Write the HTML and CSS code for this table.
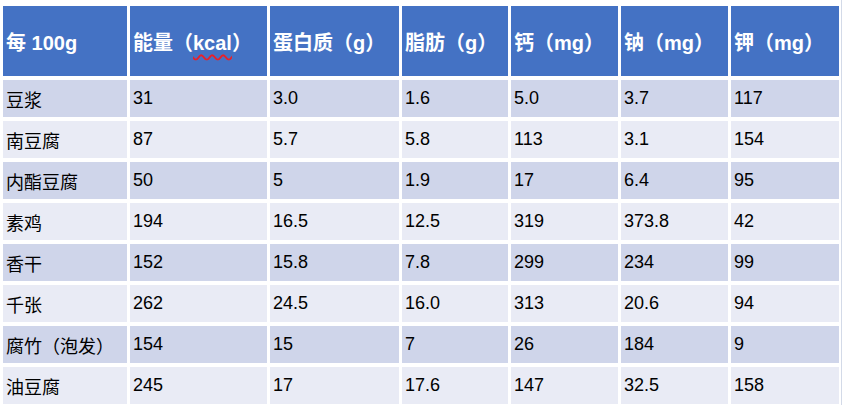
FILE: index.html
```html
<!DOCTYPE html>
<html lang="zh-CN">
<head>
  <meta charset="UTF-8" />
  <meta name="viewport" content="width=device-width, initial-scale=1.0"/>
  <title>豆制品营养成分</title>
  <link rel="stylesheet" href="styles.css">
</head>
<body>
  <div class="slide">
    <table class="nutrition">
      <colgroup>
        <col class="c-name">
        <col class="c-energy">
        <col class="c-protein">
        <col class="c-fat">
        <col class="c-mineral">
        <col class="c-mineral">
        <col class="c-last">
      </colgroup>
      <thead>
        <tr>
          <th>每 100g</th>
          <th>能量（<span class="typo">kcal</span>）</th>
          <th>蛋白质（g）</th>
          <th>脂肪（g）</th>
          <th>钙（mg）</th>
          <th>钠（mg）</th>
          <th>钾（mg）</th>
        </tr>
      </thead>
      <tbody>
        <tr><td>豆浆</td><td>31</td><td>3.0</td><td>1.6</td><td>5.0</td><td>3.7</td><td>117</td></tr>
        <tr><td>南豆腐</td><td>87</td><td>5.7</td><td>5.8</td><td>113</td><td>3.1</td><td>154</td></tr>
        <tr><td>内酯豆腐</td><td>50</td><td>5</td><td>1.9</td><td>17</td><td>6.4</td><td>95</td></tr>
        <tr><td>素鸡</td><td>194</td><td>16.5</td><td>12.5</td><td>319</td><td>373.8</td><td>42</td></tr>
        <tr><td>香干</td><td>152</td><td>15.8</td><td>7.8</td><td>299</td><td>234</td><td>99</td></tr>
        <tr><td>千张</td><td>262</td><td>24.5</td><td>16.0</td><td>313</td><td>20.6</td><td>94</td></tr>
        <tr><td>腐竹（泡发）</td><td>154</td><td>15</td><td>7</td><td>26</td><td>184</td><td>9</td></tr>
        <tr><td>油豆腐</td><td>245</td><td>17</td><td>17.6</td><td>147</td><td>32.5</td><td>158</td></tr>
      </tbody>
    </table>
  </div>
</body>
</html>
```

FILE: styles.css
```css
* {
  margin: 0;
  padding: 0;
  box-sizing: border-box;
}

body {
  font-family: "Liberation Sans", "Noto Sans CJK SC", sans-serif;
  background: white;
  color: #000;
}

.slide {
  width: 842px;
  height: 405px;
  padding-top: 2px;
  border-right: 1px solid #d3dae8;
}

.nutrition {
  width: 842px;
  table-layout: fixed;
  border-collapse: separate;
  border-spacing: 3px 4px;
  font-size: 18px;
}

.c-name { width: 124px; }
.c-energy { width: 137px; }
.c-protein { width: 129px; }
.c-fat { width: 106px; }
.c-mineral { width: 107px; }
.c-last { width: 108px; }

.nutrition th,
.nutrition td {
  padding: 0 3px;
  text-align: left;
  vertical-align: middle;
  white-space: nowrap;
}

.nutrition th {
  height: 70px;
  background: #4472c4;
  color: white;
  font-size: 20px;
  font-weight: bold;
}

.nutrition td {
  height: 37px;
}

.nutrition tbody tr:nth-child(odd) td {
  background: #cfd5ea;
}

.nutrition tbody tr:nth-child(even) td {
  background: #e9ebf5;
}

.typo {
  text-decoration: underline wavy #e8202a;
  text-decoration-thickness: 1.5px;
  text-underline-offset: 4px;
}
```
